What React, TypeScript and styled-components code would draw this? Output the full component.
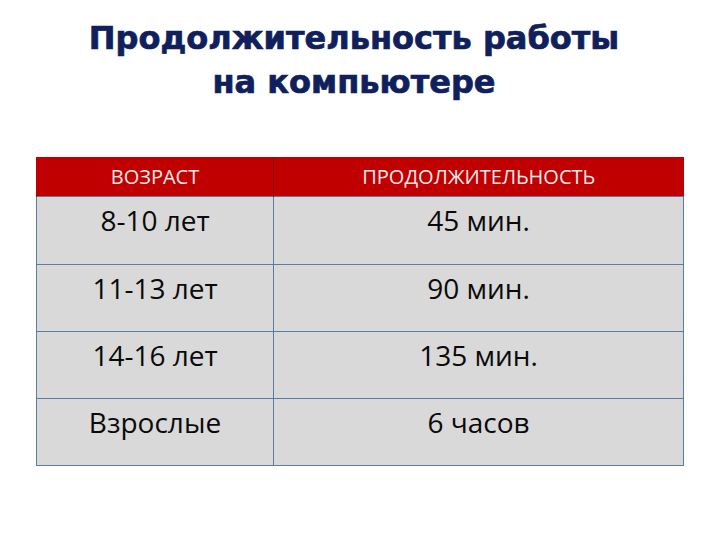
import { FC } from 'react';
import styled, { createGlobalStyle } from 'styled-components';

interface Row {
  age: string;
  time: string;
}

const rows: Row[] = [
  { age: '8-10 лет', time: '45 мин.' },
  { age: '11-13 лет', time: '90 мин.' },
  { age: '14-16 лет', time: '135 мин.' },
  { age: 'Взрослые', time: '6 часов' },
];

const App: FC = () => {
  return (
    <>
      <GlobalStyle />
      <Slide>
        <Title>
          Продолжительность работы
          <br />
          на компьютере
        </Title>
        <Table>
          <thead>
            <tr>
              <HeadCell first>ВОЗРАСТ</HeadCell>
              <HeadCell>ПРОДОЛЖИТЕЛЬНОСТЬ</HeadCell>
            </tr>
          </thead>
          <tbody>
            {rows.map((r, i) => (
              <BodyRow key={r.age} tall={i === 0}>
                <Cell>{r.age}</Cell>
                <Cell>{r.time}</Cell>
              </BodyRow>
            ))}
          </tbody>
        </Table>
      </Slide>
    </>
  );
};

export default App;

const GlobalStyle = createGlobalStyle`
  html, body {
    margin: 0;
    padding: 0;
    background: #ffffff;
  }
`

const Slide = styled('div')`
  width: 720px;
  height: 540px;
  box-sizing: border-box;
  padding: 16px 0 0 36px;
  background: #ffffff;
`

const Title = styled('h1')`
  margin: 0 0 53px 0;
  width: 636px;
  text-align: center;
  font-family: "DejaVu Sans", Verdana, sans-serif;
  font-weight: bold;
  font-size: 32px;
  line-height: 44px;
  color: #10205c;
  -webkit-text-stroke: 0.7px #10205c;
`

const Table = styled('table')`
  width: 648px;
  border-collapse: collapse;
  table-layout: fixed;
  font-family: "Open Sans", "Liberation Sans", sans-serif;
`

const HeadCell = styled('th')<{ first?: boolean }>`
  width: ${p => p.first ? '236px' : 'auto'};
  height: 39px;
  padding: 0;
  background: #c00000;
  color: #f7eaea;
  font-size: 20px;
  font-weight: normal;
  text-align: center;
  vertical-align: middle;
  border-left: 1px solid ${p => p.first ? '#c00000' : '#8a0a0a'};
`

const BodyRow = styled('tr')<{ tall?: boolean }>`
  height: ${p => p.tall ? 68 : 67}px;
`

const Cell = styled('td')`
  padding: 7px 0 0 0;
  background: #d9d9d9;
  color: #0a0a0a;
  font-size: 28px;
  line-height: 32px;
  text-align: center;
  vertical-align: top;
  border: 1px solid #5b7da3;
  box-sizing: border-box;
`
